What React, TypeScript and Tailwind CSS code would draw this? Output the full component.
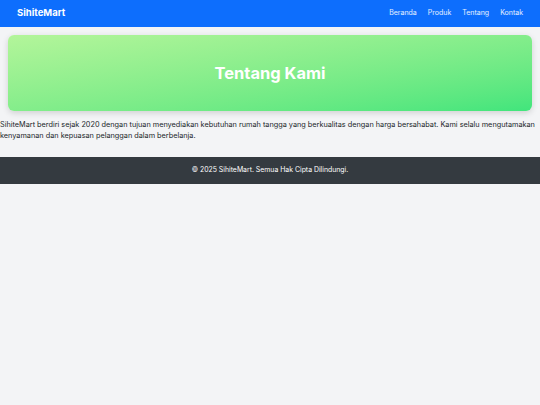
const links = ['Beranda', 'Produk', 'Tentang', 'Kontak'];

export default function App() {
  return (
    <div
      className="min-h-[405px] bg-[#f3f4f6] text-[#212529]"
      style={{ fontFamily: 'Inter, "Noto Sans", sans-serif' }}
    >
      <nav className="flex h-[27px] items-center justify-between bg-[#0d6efd] px-[17px]">
        <span className="text-[9.5px] font-bold text-white">SihiteMart</span>
        <ul className="flex gap-[11px] text-[7px] text-white/90">
          {links.map((link) => (
            <li key={link}>{link}</li>
          ))}
        </ul>
      </nav>

      <main className="pt-[8px]">
        <section className="mx-[8px] flex h-[76px] items-center justify-center rounded-[6px] bg-gradient-to-br from-[#b3f59a] to-[#40e57c] shadow-[0_2px_6px_rgba(0,0,0,0.15)]">
          <h1 className="text-[16.5px] font-bold text-white">Tentang Kami</h1>
        </section>
        <p className="mt-[8px] text-[7.3px] leading-[11px] text-[#212529]">
          SihiteMart berdiri sejak 2020 dengan tujuan menyediakan kebutuhan rumah tangga yang berkualitas dengan harga bersahabat. Kami selalu mengutamakan kenyamanan dan kepuasan pelanggan dalam berbelanja.
        </p>
      </main>

      <footer className="mt-[16px] flex h-[27px] items-center justify-center bg-[#343a40] text-[6.9px] text-white">
        © 2025 SihiteMart. Semua Hak Cipta Dilindungi.
      </footer>
    </div>
  );
}
